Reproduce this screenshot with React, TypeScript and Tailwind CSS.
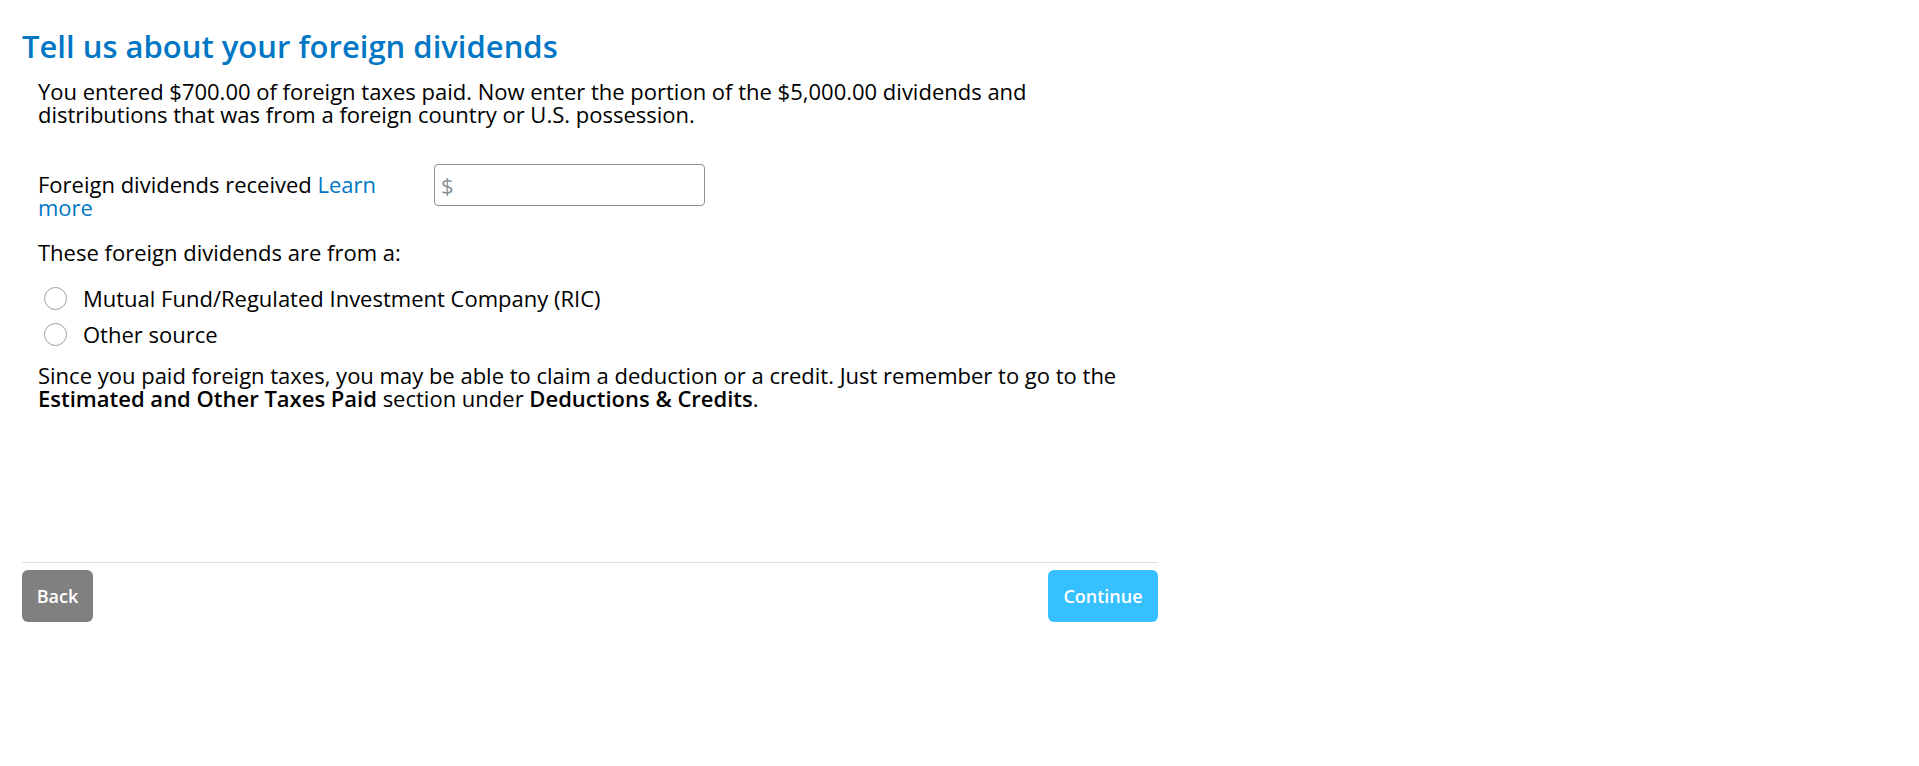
import { useState } from 'react'

const font = { fontFamily: '"Open Sans", Lato, sans-serif' }

function Radio({ label, checked, onSelect }: { label: string; checked: boolean; onSelect: () => void }) {
  return (
    <div className="flex items-center h-[36px] cursor-pointer" onClick={onSelect}>
      <span className="ml-[6px] w-[23px] h-[23px] rounded-full border border-[#9aa0a6] bg-white flex items-center justify-center shrink-0">
        {checked && <span className="w-[11px] h-[11px] rounded-full bg-[#0077c5]" />}
      </span>
      <span className="ml-[16px]">{label}</span>
    </div>
  )
}

export default function App() {
  const [source, setSource] = useState<string | null>(null)

  return (
    <div className="min-h-screen bg-white" style={font}>
      <div className="ml-[22px] w-[1136px] pt-[28px]">
        <h1 className="text-[31px] leading-[36px] font-semibold text-[#0077c5]">
          Tell us about your foreign dividends
        </h1>

        <div className="px-[16px] text-[22px] leading-[23px] text-black">
          <p className="mt-[16px]">
            You entered $700.00 of foreign taxes paid. Now enter the portion of the $5,000.00 dividends and
            <br />
            distributions that was from a foreign country or U.S. possession.
          </p>

          <div className="flex items-start mt-[38px]">
            <div className="w-[380px] mr-[16px] pt-[9px]">
              Foreign dividends received{' '}
              <a href="#" className="text-[#0077c5]">
                Learn more
              </a>
            </div>
            <div className="w-[271px] h-[42px] border border-[#8a9199] rounded-[4px] flex items-center px-[6px]">
              <span className="text-[#8a9199]">$</span>
              <input className="flex-1 min-w-0 outline-none bg-transparent ml-1" />
            </div>
          </div>

          <p className="mt-[22px]">These foreign dividends are from a:</p>

          <div className="mt-[16px]">
            <Radio
              label="Mutual Fund/Regulated Investment Company (RIC)"
              checked={source === 'ric'}
              onSelect={() => setSource('ric')}
            />
            <Radio label="Other source" checked={source === 'other'} onSelect={() => setSource('other')} />
          </div>

          <p className="mt-[12px]">
            Since you paid foreign taxes, you may be able to claim a deduction or a credit. Just remember to go to the
            <br />
            <b className="font-semibold">Estimated and Other Taxes Paid</b> section under{' '}
            <b className="font-semibold">Deductions &amp; Credits</b>.
          </p>
        </div>

        <div className="mt-[152px] border-t border-[#d8dde3] pt-[7px] flex justify-between">
          <button className="w-[71px] h-[52px] rounded-[6px] bg-[#808080] text-white text-[18px] font-semibold">
            Back
          </button>
          <button className="w-[110px] h-[52px] rounded-[6px] bg-[#37c0ff] text-white text-[18px] font-semibold">
            Continue
          </button>
        </div>
      </div>
    </div>
  )
}
